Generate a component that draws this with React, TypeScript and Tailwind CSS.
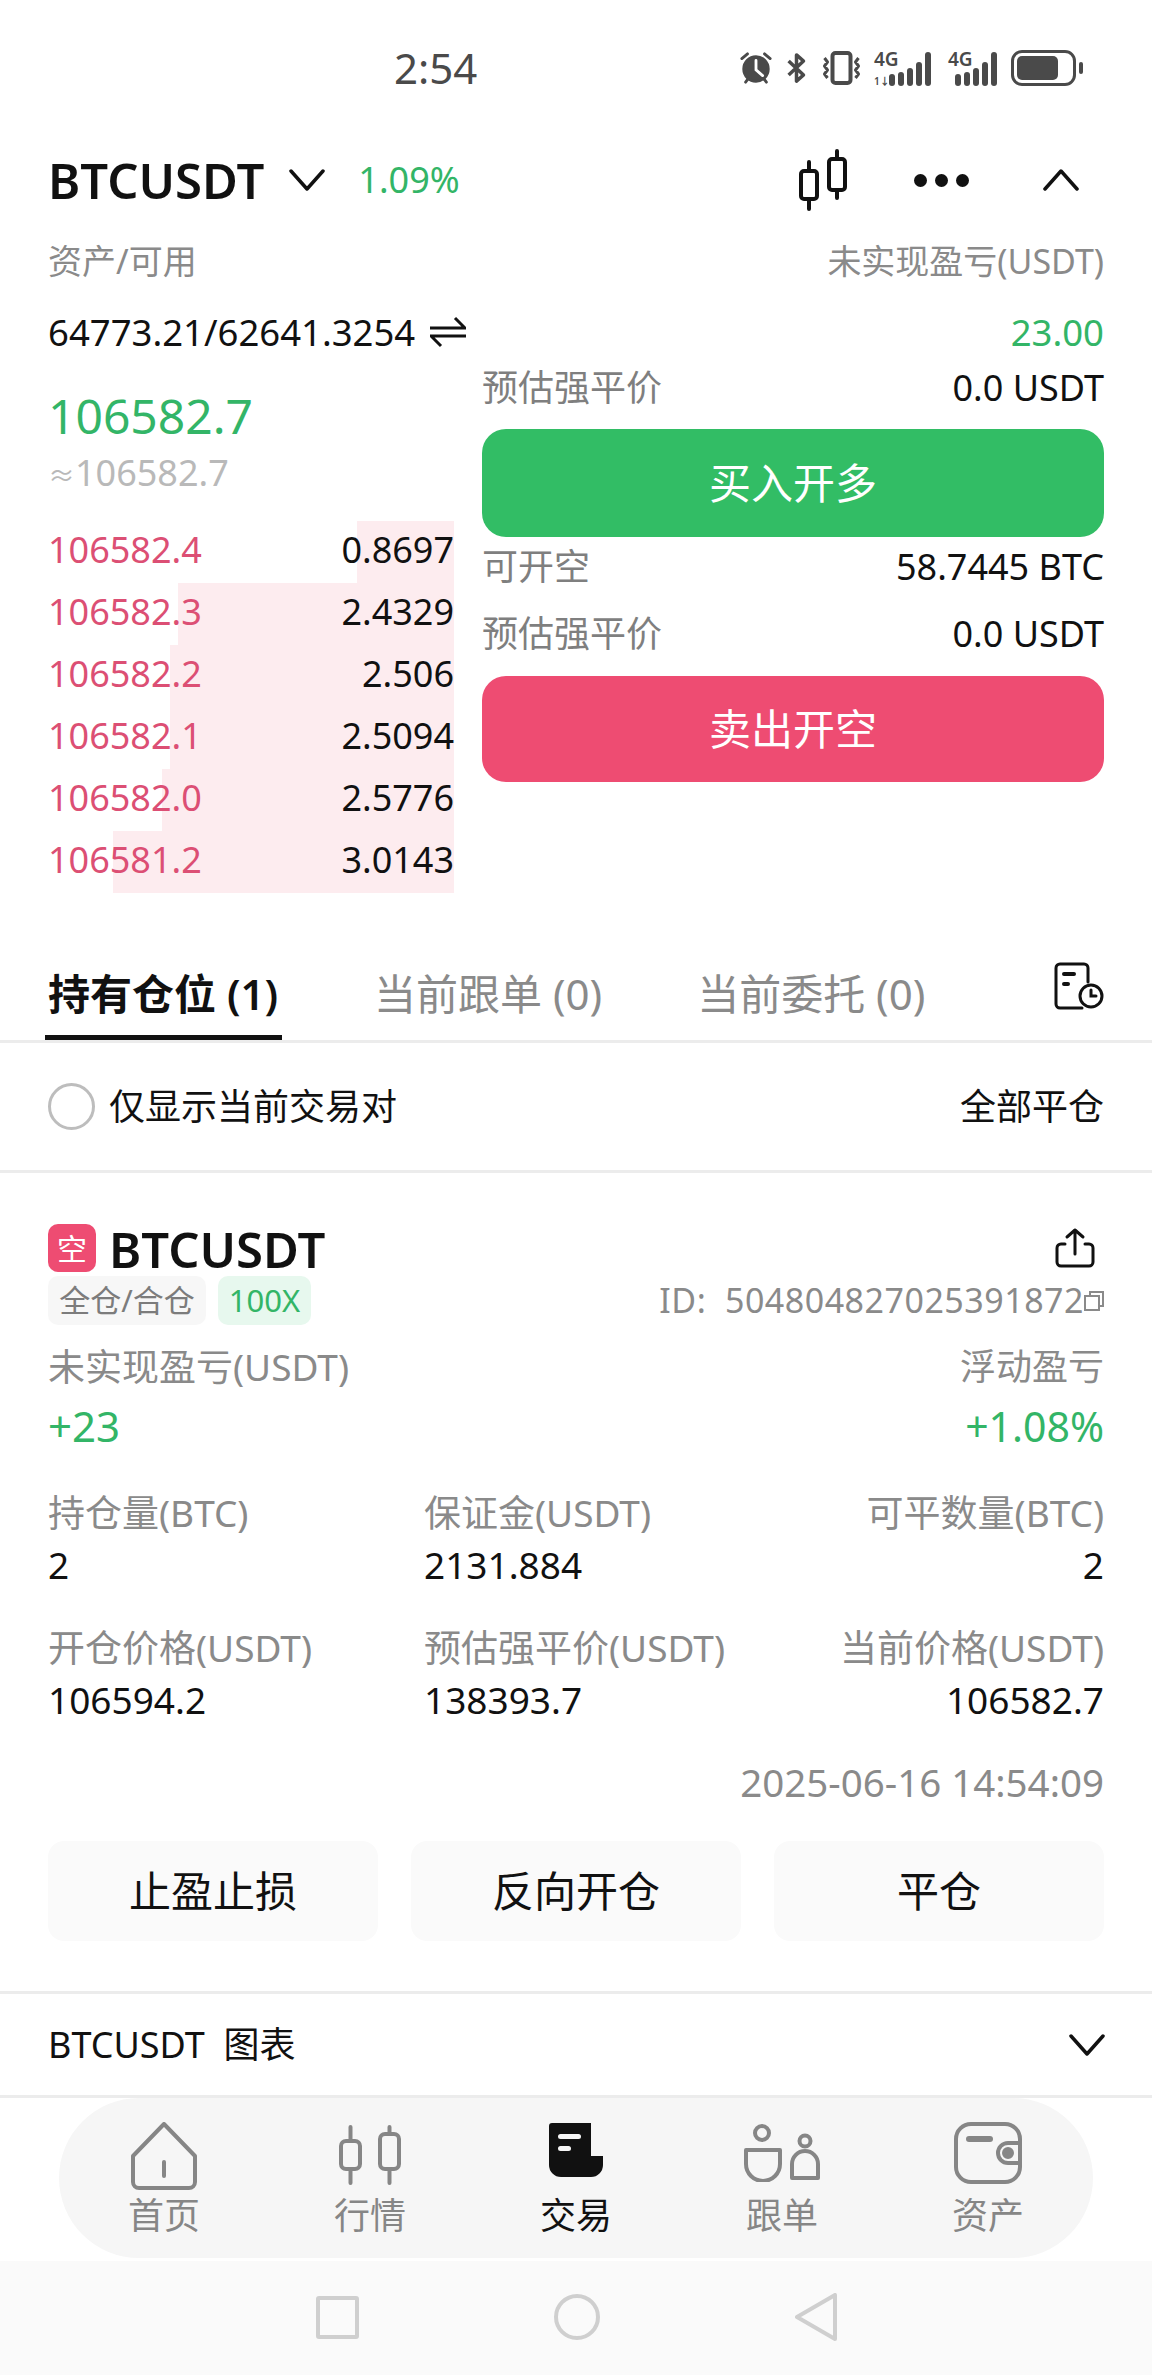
const asks = [
    { price: '106582.4', size: '0.8697', bar: 97 },
    { price: '106582.3', size: '2.4329', bar: 276 },
    { price: '106582.2', size: '2.506', bar: 284 },
    { price: '106582.1', size: '2.5094', bar: 284 },
    { price: '106582.0', size: '2.5776', bar: 292 },
    { price: '106581.2', size: '3.0143', bar: 341 },
];

function Caret({ up, className }: { up?: boolean; className: string }) {
    return (
        <svg viewBox="0 0 36 22" className={className} fill="none" stroke="currentColor" strokeWidth="3.5" strokeLinecap="round" strokeLinejoin="round">
            <path d={up ? 'M2 20L18 2L34 20' : 'M2 2L18 20L34 2'} />
        </svg>
    );
}

function Stat({ label, value, align = 'left' }: { label: string; value: string; align?: 'left' | 'right' }) {
    return (
        <div className={align === 'right' ? 'text-right' : ''}>
            <div className="h-[52px] leading-[52px] text-[37px] text-[#8a8a8a] whitespace-nowrap">{label}</div>
            <div className="h-[52px] leading-[52px] text-[37px] text-[#111]">{value}</div>
        </div>
    );
}

function NavItem({ label, active, children }: { label: string; active?: boolean; children: React.ReactNode }) {
    return (
        <div className={`w-[206px] flex flex-col items-center ${active ? 'text-[#111]' : 'text-[#868686]'}`}>
            <div className="h-[68px] flex items-start justify-center">{children}</div>
            <div className="mt-[2px] h-[48px] leading-[48px] text-[36px]">{label}</div>
        </div>
    );
}

export default function App() {
    return (
        <div className="w-[1152px] h-[2376px] overflow-hidden bg-white text-[#111] font-['Noto_Sans','Noto_Sans_CJK_SC',sans-serif]">
            {/* Status bar */}
            <div className="h-[136px] flex items-center text-[#4a4a4a]">
                <div className="ml-[394px] text-[42px] leading-none">2:54</div>
                <div className="ml-auto mr-[69px] flex items-center">
                    <svg viewBox="0 0 36 36" className="w-[34px] h-[36px]" fill="none" stroke="currentColor" strokeWidth="3" strokeLinecap="round">
                        <circle cx="18" cy="19" r="13" fill="currentColor" />
                        <path d="M18 10V20L25 26" stroke="#fff" />
                        <path d="M3 8L9 3M33 8L27 3M7 33L10 29M29 33L26 29" />
                    </svg>
                    <svg viewBox="0 0 24 36" className="ml-[13px] w-[21px] h-[36px]" fill="none" stroke="currentColor" strokeWidth="4" strokeLinejoin="round">
                        <path d="M3 10L20 26L12 33V3L20 10L3 26" />
                    </svg>
                    <svg viewBox="0 0 40 36" className="ml-[14px] w-[41px] h-[36px]" fill="none" stroke="currentColor" strokeWidth="3" strokeLinejoin="round">
                        <rect x="11" y="3" width="18" height="30" rx="3" strokeWidth="4" />
                        <path d="M3 8L6 12L3 16L6 20L3 24L6 28M37 8L34 12L37 16L34 20L37 24L34 28" />
                    </svg>
                    <div className="relative ml-[12px] w-[62px] h-[36px]">
                        <span className="absolute left-0 top-[-1px] text-[19px] leading-[20px] font-semibold">4G</span>
                        <span className="absolute left-0 bottom-0 flex items-end gap-[3px]">
                            <span className="w-[12px] h-[10px] text-[10px] leading-[10px] font-semibold">1↓</span>
                            {[12, 14, 18, 24, 34].map((h, i) => (
                                <span key={i} className="w-[6px] rounded-full bg-[#4a4a4a]" style={{ height: h }} />
                            ))}
                        </span>
                    </div>
                    <div className="relative ml-[12px] w-[50px] h-[36px]">
                        <span className="absolute left-0 top-[-1px] text-[19px] leading-[20px] font-semibold">4G</span>
                        <span className="absolute left-[7px] bottom-0 flex items-end gap-[3px]">
                            {[12, 14, 18, 24, 34].map((h, i) => (
                                <span key={i} className="w-[6px] rounded-full bg-[#4a4a4a]" style={{ height: h }} />
                            ))}
                        </span>
                    </div>
                    <div className="ml-[13px] w-[65px] h-[36px] rounded-[11px] border-[3px] border-[#4a4a4a] p-[3px]">
                        <div className="w-[41px] h-full rounded-[5px] bg-[#4a4a4a]" />
                    </div>
                    <div className="ml-[3px] w-[4px] h-[12px] rounded-full bg-[#4a4a4a]" />
                </div>
            </div>

            {/* Symbol header */}
            <div className="h-[88px] px-[48px] flex items-center">
                <div className="text-[49px] font-semibold leading-none">BTCUSDT</div>
                <Caret className="ml-[25px] w-[36px] h-[22px]" />
                <div className="ml-[33px] text-[36px] text-[#33b567]">1.09%</div>
                <svg viewBox="0 0 48 62" className="ml-auto w-[48px] h-[62px]" fill="none" stroke="currentColor" strokeWidth="4" strokeLinecap="round" strokeLinejoin="round">
                    <rect x="2" y="22" width="16" height="28" rx="3" />
                    <path d="M10 13V22M10 50V60" />
                    <rect x="30" y="10" width="16" height="31" rx="3" />
                    <path d="M38 2V10M38 41V49" />
                </svg>
                <div className="ml-[67px] flex gap-[8px]">
                    <span className="w-[13px] h-[13px] rounded-full bg-[#111]" />
                    <span className="w-[13px] h-[13px] rounded-full bg-[#111]" />
                    <span className="w-[13px] h-[13px] rounded-full bg-[#111]" />
                </div>
                <Caret up className="ml-[74px] mr-[25px] w-[36px] h-[22px]" />
            </div>

            {/* Balance */}
            <div className="h-[74px] px-[48px] flex items-center justify-between text-[34px] text-[#8a8a8a]">
                <span>资产/可用</span>
                <span>未实现盈亏(USDT)</span>
            </div>
            <div className="h-[68px] px-[48px] flex items-center justify-between text-[36.5px]">
                <div className="flex items-center gap-[15px]">
                    <span>64773.21/62641.3254</span>
                    <svg viewBox="0 0 36 32" className="w-[36px] h-[32px]" fill="none" stroke="currentColor" strokeWidth="3">
                        <path d="M0 12H35L25 2M36 20H1L11 30" />
                    </svg>
                </div>
                <span className="text-[#33b567]">23.00</span>
            </div>

            {/* Price, order book and order buttons */}
            <div className="h-[527px] px-[48px] flex gap-[28px]">
                <div className="w-[406px]">
                    <div className="h-[84px] pt-[21px] text-[48px] leading-[58px] text-[#33b567]">106582.7</div>
                    <div className="h-[71px] pt-[1px] text-[36px] leading-[44px] text-[#b9b9b9]">
                        <span className="text-[27px]">≈</span>106582.7
                    </div>
                    <div>
                        {asks.map((row) => (
                            <div key={row.price} className="relative h-[62px] pb-[4px] flex items-center justify-between text-[36px]">
                                <div className="absolute right-0 top-0 bottom-0 bg-[#fdecef]" style={{ width: row.bar }} />
                                <span className="relative text-[#dc4f74]">{row.price}</span>
                                <span className="relative">{row.size}</span>
                            </div>
                        ))}
                    </div>
                </div>
                <div className="w-[622px] text-[36px]">
                    <div className="h-[44px] flex items-center justify-between">
                        <span className="text-[#7f7f7f]">预估强平价</span>
                        <span>0.0 USDT</span>
                    </div>
                    <div className="mt-[19px] h-[108px] pb-[2px] rounded-[24px] bg-[#32bd65] text-white text-[42px] flex items-center justify-center">买入开多</div>
                    <div className="h-[60px] flex items-center justify-between">
                        <span className="text-[#7f7f7f]">可开空</span>
                        <span>58.7445 BTC</span>
                    </div>
                    <div className="mt-[7px] h-[60px] flex items-center justify-between">
                        <span className="text-[#7f7f7f]">预估强平价</span>
                        <span>0.0 USDT</span>
                    </div>
                    <div className="mt-[12px] h-[106px] pb-[2px] rounded-[24px] bg-[#ee4c72] text-white text-[42px] flex items-center justify-center">卖出开空</div>
                </div>
            </div>

            {/* Tabs */}
            <div className="h-[150px] border-b-[3px] border-[#ececec] px-[48px] flex items-end">
                <div className="relative h-[85px] w-[231px] text-[42px] leading-[78px] font-semibold whitespace-nowrap">
                    持有仓位 (1)
                    <div className="absolute left-[-3px] right-[-3px] bottom-0 h-[5px] bg-[#111]" />
                </div>
                <div className="ml-[95px] h-[85px] text-[42px] leading-[78px] text-[#8a8a8a] whitespace-nowrap">当前跟单 (0)</div>
                <div className="ml-[95px] h-[85px] text-[42px] leading-[78px] text-[#8a8a8a] whitespace-nowrap">当前委托 (0)</div>
                <svg viewBox="0 0 50 48" className="ml-auto mb-[30px] w-[50px] h-[48px]" fill="none" stroke="#111" strokeWidth="3" strokeLinecap="round">
                    <path d="M28 46H6A4 4 0 0 1 2 42V6A4 4 0 0 1 6 2H30A4 4 0 0 1 34 6V20" />
                    <path d="M10 12H20M10 22H14" strokeWidth="4" />
                    <circle cx="37" cy="34" r="11" />
                    <path d="M37 28V34H42" />
                </svg>
            </div>

            {/* Filter */}
            <div className="h-[130px] border-b-[3px] border-[#ececec] px-[48px] flex items-center">
                <div className="w-[47px] h-[47px] rounded-full border-[3px] border-[#bdbdbd]" />
                <span className="ml-[14px] text-[36px]">仅显示当前交易对</span>
                <span className="ml-auto text-[36px]">全部平仓</span>
            </div>

            {/* Position */}
            <div className="h-[821px] border-b-[3px] border-[#ececec] px-[48px] pt-[50px]">
                <div className="h-[50px] flex items-center">
                    <div className="w-[48px] h-[48px] rounded-[10px] bg-[#ee4c72] text-white text-[30px] flex items-center justify-center">空</div>
                    <span className="ml-[13px] pt-[4px] text-[49px] font-semibold">BTCUSDT</span>
                    <svg viewBox="0 0 40 40" className="ml-auto mr-[9px] w-[40px] h-[40px]" fill="none" stroke="#111" strokeWidth="3" strokeLinecap="round" strokeLinejoin="round">
                        <path d="M20 26V2M12 9L20 2L28 9M10 16H6A4 4 0 0 0 2 20V34A4 4 0 0 0 6 38H34A4 4 0 0 0 38 34V20A4 4 0 0 0 34 16H30" />
                    </svg>
                </div>
                <div className="mt-[3px] h-[49px] flex items-center">
                    <div className="h-[49px] w-[158px] rounded-[10px] bg-[#f7f7f7] text-[#7c7c7c] text-[31px] flex items-center justify-center">全仓/合仓</div>
                    <div className="ml-[12px] h-[49px] w-[93px] rounded-[10px] bg-[#e7f8ee] text-[#33b567] text-[31px] flex items-center justify-center">100X</div>
                    <div className="ml-auto flex items-center text-[34px] text-[#8a8a8a] tracking-[0.5px]">
                        <span>ID:&nbsp;&nbsp;504804827025391872</span>
                        <svg viewBox="0 0 20 20" className="w-[20px] h-[20px]" fill="none" stroke="#8a8a8a" strokeWidth="2">
                            <path d="M6 5V1H19V15H15" />
                            <rect x="1" y="5" width="14" height="14" />
                        </svg>
                    </div>
                </div>
                <div className="mt-[16px] flex justify-between">
                    <div>
                        <div className="h-[52px] leading-[52px] text-[37px] text-[#8a8a8a]">未实现盈亏(USDT)</div>
                        <div className="h-[66px] leading-[66px] text-[42px] text-[#33b567]">+23</div>
                    </div>
                    <div className="text-right">
                        <div className="h-[52px] leading-[52px] text-[36px] text-[#8a8a8a]">浮动盈亏</div>
                        <div className="h-[66px] leading-[66px] text-[41px] text-[#33b567]">+1.08%</div>
                    </div>
                </div>
                <div className="mt-[28px] grid grid-cols-[376px_1fr_auto] gap-y-[31px]">
                    <Stat label="持仓量(BTC)" value="2" />
                    <Stat label="保证金(USDT)" value="2131.884" />
                    <Stat label="可平数量(BTC)" value="2" align="right" />
                    <Stat label="开仓价格(USDT)" value="106594.2" />
                    <Stat label="预估强平价(USDT)" value="138393.7" />
                    <Stat label="当前价格(USDT)" value="106582.7" align="right" />
                </div>
                <div className="mt-[28px] h-[56px] leading-[56px] text-right text-[38.5px] text-[#8a8a8a]">2025-06-16 14:54:09</div>
                <div className="mt-[31px] grid grid-cols-3 gap-[33px]">
                    {['止盈止损', '反向开仓', '平仓'].map((label) => (
                        <div key={label} className="h-[100px] pb-[2px] rounded-[16px] bg-[#fafafa] text-[42px] flex items-center justify-center">{label}</div>
                    ))}
                </div>
            </div>

            {/* Chart row */}
            <div className="h-[104px] border-b-[3px] border-[#ececec] pl-[48px] pr-[47px] flex items-center justify-between text-[36px]">
                <span>BTCUSDT&nbsp;&nbsp;图表</span>
                <Caret className="w-[36px] h-[22px]" />
            </div>

            {/* Tab bar */}
            <div className="mx-[59px] h-[160px] rounded-[80px] bg-[#f6f6f6] flex items-start justify-center pt-[24px]">
                <NavItem label="首页">
                    <svg viewBox="0 0 66 68" className="w-[66px] h-[68px]" fill="none" stroke="currentColor" strokeWidth="4" strokeLinejoin="round" strokeLinecap="round">
                        <path d="M33 2L64 34V60A6 6 0 0 1 58 66H8A6 6 0 0 1 2 60V34Z" />
                        <path d="M33 40V54" />
                    </svg>
                </NavItem>
                <NavItem label="行情">
                    <svg viewBox="0 0 62 60" className="mt-[3px] w-[62px] h-[60px]" fill="none" stroke="currentColor" strokeWidth="4" strokeLinecap="round" strokeLinejoin="round">
                        <rect x="2" y="16" width="19" height="28" rx="5" />
                        <path d="M11.5 2V16M11.5 44V58" />
                        <rect x="41" y="9" width="19" height="35" rx="5" />
                        <path d="M50.5 2V9M50.5 44V58" />
                    </svg>
                </NavItem>
                <NavItem label="交易" active>
                    <svg viewBox="0 0 54 54" className="mt-[1px] w-[54px] h-[54px]">
                        <path d="M3 0H42V33H54V42A12 12 0 0 1 42 54H12A12 12 0 0 1 0 42V3A3 3 0 0 1 3 0Z" fill="currentColor" />
                        <rect x="9" y="11" width="23" height="5" rx="2.5" fill="#f6f6f6" />
                        <rect x="9" y="23" width="13" height="5" rx="2.5" fill="#f6f6f6" />
                    </svg>
                </NavItem>
                <NavItem label="跟单">
                    <svg viewBox="0 0 76 58" className="mt-[2px] w-[76px] h-[58px]" fill="none" stroke="currentColor" strokeWidth="4" strokeLinejoin="round">
                        <circle cx="18" cy="9" r="7" />
                        <path d="M2 26H36V40A17 17 0 0 1 2 40Z" />
                        <circle cx="61" cy="17" r="5.5" />
                        <path d="M48 54V40A13 13 0 0 1 74 40V54Z" />
                    </svg>
                </NavItem>
                <NavItem label="资产">
                    <svg viewBox="0 0 68 62" className="w-[68px] h-[62px]" fill="none" stroke="currentColor" strokeWidth="4">
                        <rect x="2" y="2" width="64" height="58" rx="15" />
                        <path d="M15 17H36" strokeWidth="6" strokeLinecap="round" />
                        <path d="M66 21H54A10 10 0 0 0 54 41H66Z" />
                        <circle cx="54" cy="31" r="4" fill="currentColor" />
                    </svg>
                </NavItem>
            </div>

            {/* System navigation */}
            <div className="mt-[3px] h-[114px] bg-[#fafafa] flex items-center justify-center gap-[195px] pb-[2px] text-[#cfcfcf]">
                <div className="w-[43px] h-[43px] rounded-[3px] border-[4px] border-[#cfcfcf]" />
                <div className="w-[46px] h-[46px] rounded-full border-[4px] border-[#cfcfcf]" />
                <svg viewBox="0 0 42 48" className="w-[42px] h-[48px]" fill="none" stroke="currentColor" strokeWidth="4" strokeLinejoin="round">
                    <path d="M40 2V46L2 24Z" />
                </svg>
            </div>
        </div>
    );
}
